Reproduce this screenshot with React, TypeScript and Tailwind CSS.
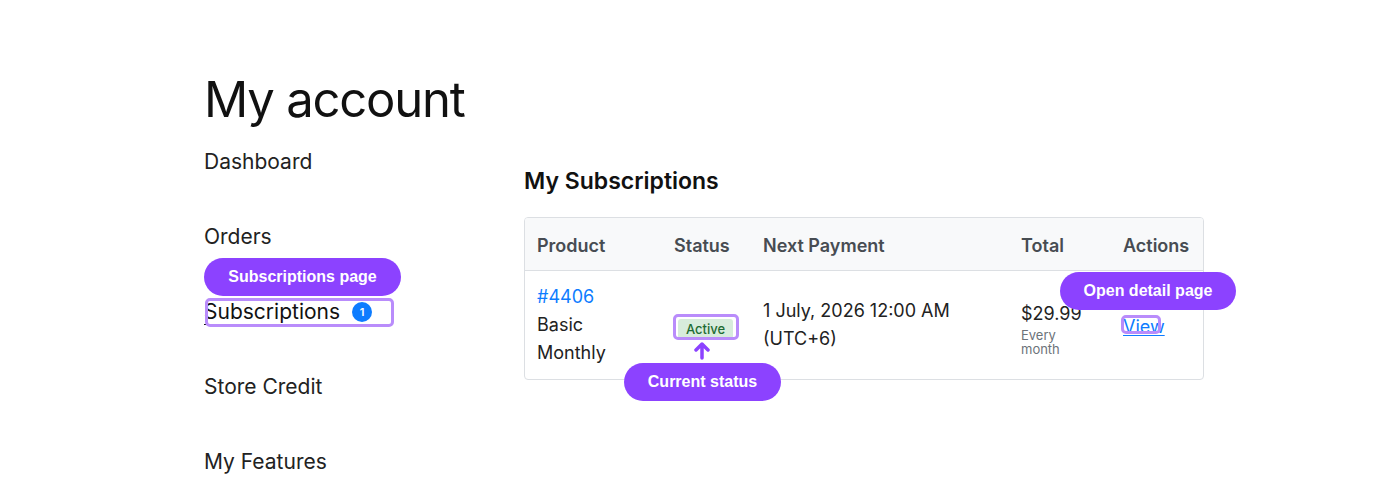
const sans = "font-['Inter','Noto_Sans',sans-serif]";

function Pill({ label, className }: { label: string; className: string }) {
  return (
    <div
      className={`absolute flex h-[38px] items-center justify-center rounded-full bg-[#8c42ff] text-[16px] font-bold text-white font-['Liberation_Sans',Arial,sans-serif] ${className}`}
    >
      {label}
    </div>
  );
}

function Ring({ className }: { className: string }) {
  return <div className={`absolute rounded-[5px] border-[3px] border-[#b98cfb] ${className}`} />;
}

const navItems = ["Dashboard", "Orders", "Subscriptions", "Store Credit", "My Features"];

export default function App() {
  return (
    <div className={`relative min-h-[497px] w-[1389px] overflow-hidden bg-white text-[#111] ${sans}`}>
      <div className="pl-[204px] pt-[68px]">
        <h1 className="text-[49px] leading-[64px] tracking-[-1.2px] text-[#111]">My account</h1>

        <div className="flex">
          {/* account navigation */}
          <nav className="flex w-[320px] flex-col gap-[45px] pt-[15px]">
            {navItems.map((item) =>
              item === "Subscriptions" ? (
                <a key={item} className="flex h-[30px] items-center gap-[6px] text-[21px] text-[#111]">
                  <span className="underline decoration-1 underline-offset-[5px]">Subscriptions&nbsp;</span>
                  <span className="flex h-[20px] w-[20px] items-center justify-center rounded-full bg-[#0d7cff] text-[11px] font-semibold text-white">
                    1
                  </span>
                </a>
              ) : (
                <a key={item} className="flex h-[30px] items-center text-[21px] text-[#222]">
                  {item}
                </a>
              )
            )}
          </nav>

          {/* subscriptions table */}
          <section className="w-[680px] pt-[34px]">
            <h2 className="text-[23px] font-semibold leading-[30px] text-[#111]">My Subscriptions</h2>
            <div className="mt-[21px] overflow-hidden rounded-[4px] border border-[#dcdfe3]">
              <div className="grid h-[53px] grid-cols-[149px_89px_258px_102px_1fr] items-center border-b border-[#dcdfe3] bg-[#f8f9fa] pt-[2px] text-[18px] font-semibold text-[#474c52]">
                <div className="pl-[12px]">Product</div>
                <div>Status</div>
                <div>Next Payment</div>
                <div>Total</div>
                <div>Actions</div>
              </div>
              <div className="grid h-[108px] grid-cols-[149px_89px_258px_102px_1fr] items-center text-[18px]">
                <div className="pl-[12px] leading-[28px]">
                  <div className="text-[#0d7cff]">#4406</div>
                  <div className="text-[#222]">Basic</div>
                  <div className="text-[#222]">Monthly</div>
                </div>
                <div className="pt-[4px]">
                  <span className="ml-[4px] inline-block rounded-[3px] bg-[#d7ecdc] px-[8px] py-[1px] text-[13px] font-medium leading-[18px] text-[#1e6b33]">
                    Active
                  </span>
                </div>
                <div className="leading-[28px] text-[#222]">
                  <div>1 July, 2026 12:00 AM</div>
                  <div>(UTC+6)</div>
                </div>
                <div className="pt-[6px]">
                  <div className="text-[18px] leading-[28px] text-[#222]">$29.99</div>
                  <div className="w-[60px] text-[13px] leading-[14px] text-[#6c737a]">Every month</div>
                </div>
                <div className="pt-[2px]">
                  <a className="text-[18px] text-[#0d7cff] underline decoration-1 underline-offset-2">View</a>
                </div>
              </div>
            </div>
          </section>
        </div>
      </div>

      {/* guide overlays */}
      <Ring className="left-[205px] top-[298px] h-[29px] w-[189px]" />
      <Pill label="Subscriptions page" className="left-[204px] top-[258px] w-[197px]" />

      <Ring className="left-[673px] top-[314px] h-[26px] w-[66px]" />
      <svg className="absolute left-[694px] top-[342px]" width="16" height="18" viewBox="0 0 16 18">
        <path d="M8 2 L14 8 M8 2 L2 8 M8 2 V16" stroke="#8c42ff" strokeWidth="3.5" strokeLinecap="round" fill="none" />
      </svg>
      <Pill label="Current status" className="left-[624px] top-[363px] w-[157px]" />

      <Ring className="left-[1121px] top-[315px] h-[19px] w-[40px]" />
      <Pill label="Open detail page" className="left-[1060px] top-[272px] w-[176px]" />
    </div>
  );
}
